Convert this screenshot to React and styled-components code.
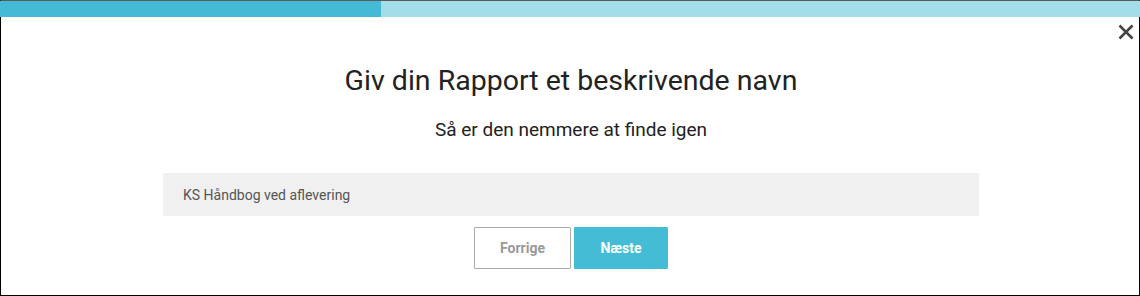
import React from 'react'
import styled, { createGlobalStyle } from 'styled-components'

const Global = createGlobalStyle`
  html, body {
    margin: 0;
    padding: 0;
    background: #fff;
  }
  * {
    box-sizing: border-box;
  }
`

const Frame = styled.div`
  position: relative;
  width: 1140px;
  height: 296px;
  border: 1px solid #000;
  border-top-color: #5a5a5a;
  background: #fff;
  font-family: Roboto, "Liberation Sans", sans-serif;
`

const Progress = styled.div`
  height: 16px;
  margin: 0 -1px;
  background: #a2dde9;
`

const ProgressFill = styled.div`
  height: 100%;
  background: #45bad6;
`

const CloseButton = styled.button`
  position: absolute;
  top: 21px;
  right: 3px;
  width: 20px;
  height: 20px;
  padding: 0;
  border: none;
  background: transparent;
  cursor: pointer;
  display: flex;
  align-items: center;
  justify-content: center;
`

const Body = styled.div`
  width: 816px;
  margin-left: 162px;
  padding-top: 49px;
  display: flex;
  flex-direction: column;
  align-items: center;
`

const Title = styled.h1`
  margin: 0;
  font-size: 28.5px;
  line-height: 30px;
  font-weight: 400;
  color: #222;
`

const Subtitle = styled.h2`
  margin: 22px 0 0;
  font-size: 19px;
  line-height: 24px;
  font-weight: 400;
  color: #222;
`

const NameInput = styled.input`
  width: 100%;
  height: 43px;
  margin-top: 31px;
  padding: 0 20px;
  border: none;
  outline: none;
  background: #f0f0f0;
  font-family: inherit;
  font-size: 14px;
  color: #555;
`

const Actions = styled.div`
  display: flex;
  gap: 3px;
  margin-top: 11px;
`

const Button = styled.button`
  height: 42px;
  width: ${p => p.$w}px;
  border: 1px solid ${p => (p.$primary ? '#45bcd6' : '#aaa')};
  border-radius: 1px;
  background: ${p => (p.$primary ? '#45bcd6' : '#fff')};
  color: ${p => (p.$primary ? '#fff' : '#999')};
  font-family: inherit;
  font-size: 14px;
  font-weight: 700;
  cursor: pointer;
`

export default function App() {
  const step = 381 / 1140

  return (
    <>
      <Global />
      <Frame>
        <Progress>
          <ProgressFill style={{ width: `${step * 100}%` }} />
        </Progress>
        <CloseButton aria-label="Luk">
          <svg width="16" height="16" viewBox="0 0 16 16">
            <path d="M1.5 1.5 L14.5 14.5 M14.5 1.5 L1.5 14.5" stroke="#444" strokeWidth="2.6" />
          </svg>
        </CloseButton>
        <Body>
          <Title>Giv din Rapport et beskrivende navn</Title>
          <Subtitle>Så er den nemmere at finde igen</Subtitle>
          <NameInput defaultValue="KS Håndbog ved aflevering" />
          <Actions>
            <Button $w={97}>Forrige</Button>
            <Button $w={94} $primary>Næste</Button>
          </Actions>
        </Body>
      </Frame>
    </>
  )
}
